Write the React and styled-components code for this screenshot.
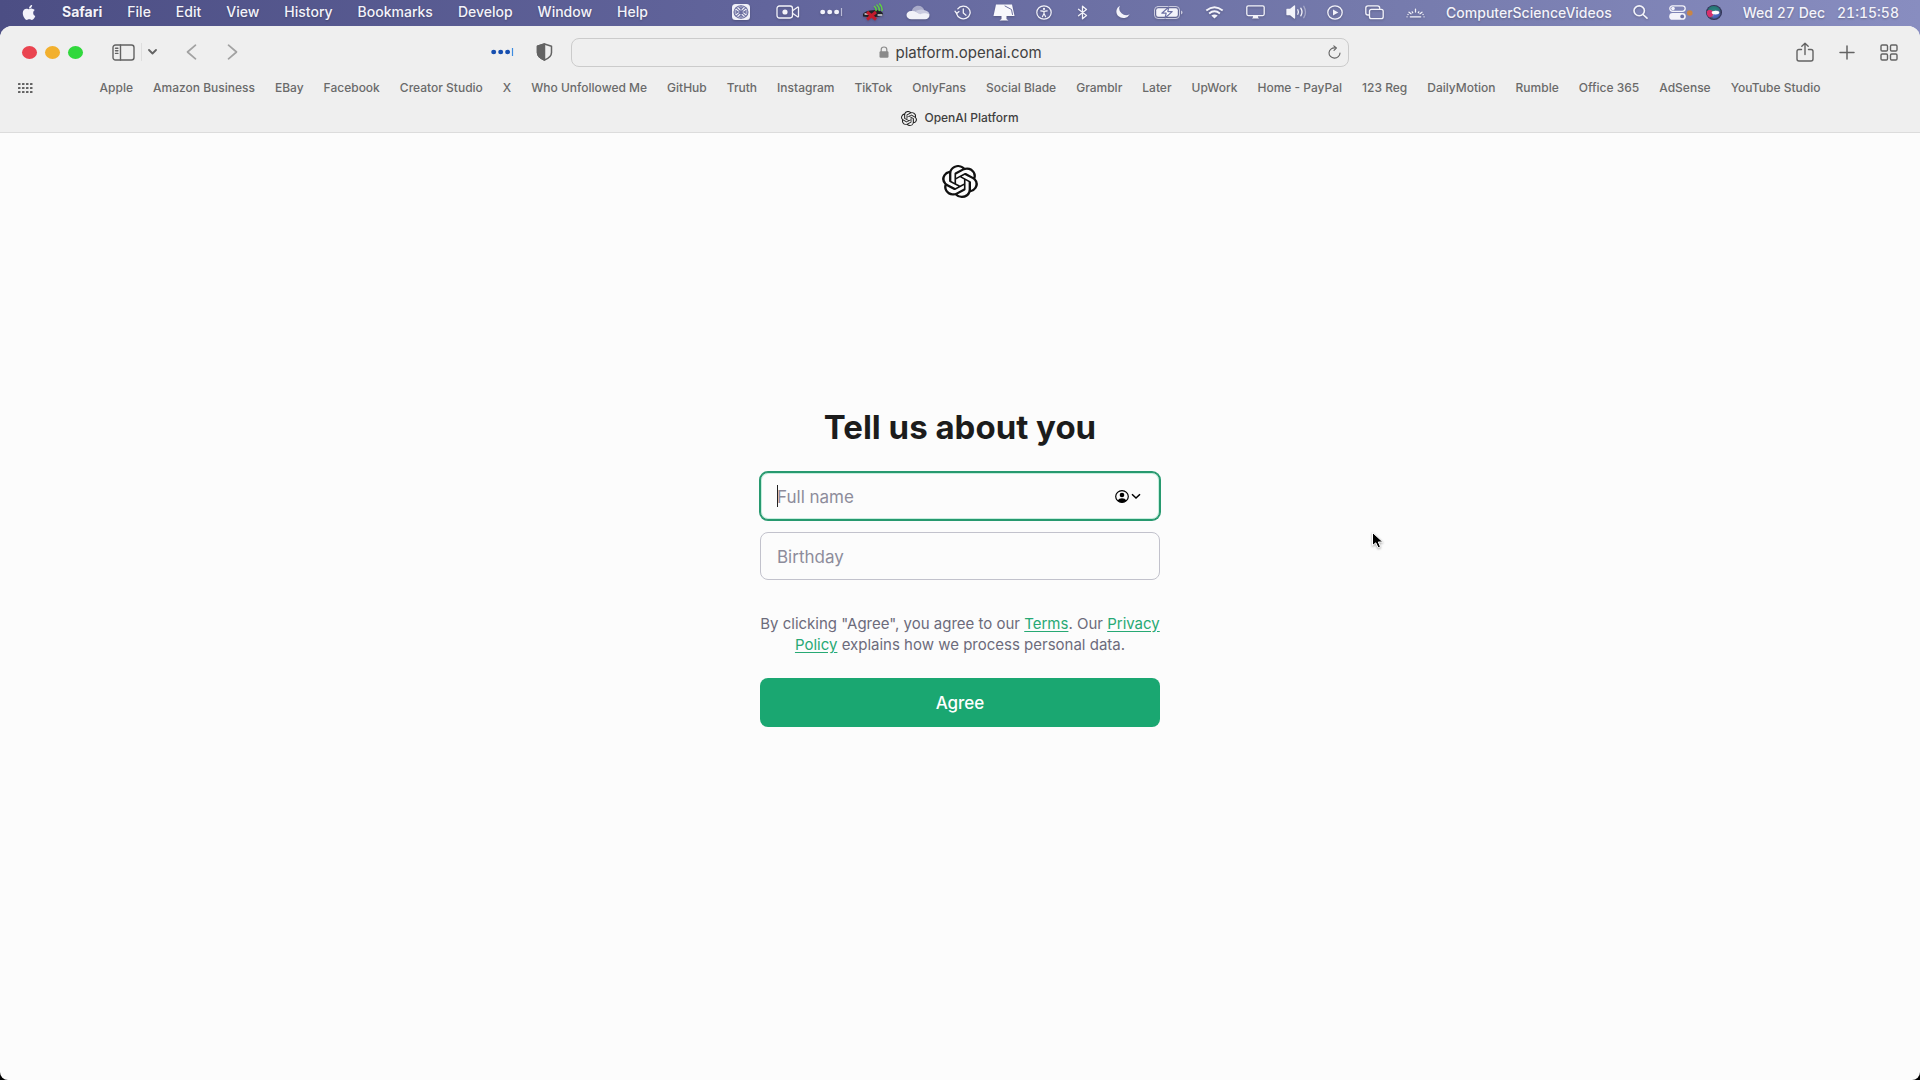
import React from "react";
import styled, { createGlobalStyle } from "styled-components";
import { FaApple } from "react-icons/fa";

const GlobalStyle = createGlobalStyle`
  * {
    box-sizing: border-box;
  }

  body {
    margin: 0;
    background: #000;
    font-family: Inter, "Liberation Sans", sans-serif;
  }

  button,
  input {
    font-family: inherit;
  }
`;

const Desktop = styled.div`
  min-height: 100vh;
  display: flex;
  flex-direction: column;
  background: linear-gradient(90deg, #4c4e84 0%, #62659c 40%, #7479ab 70%, #888dc0 100%) top / 100% 60px no-repeat, #000;
`;

/* ---------- menu bar ---------- */

const MenuBar = styled.header`
  height: 26px;
  display: flex;
  justify-content: space-between;
  align-items: center;
  padding: 0 21px 2px;
  color: #f3f3fa;
  font-size: 14px;
  font-weight: 500;
  text-shadow: 0 1px 2px rgba(0, 0, 0, 0.25);
`;

const Menus = styled.nav`
  display: flex;
  align-items: center;
  gap: 25px;
`;

const AppleMark = styled(FaApple)`
  width: 16px;
  height: 17px;
`;

const MenuItem = styled.button`
  padding: 0;
  border: none;
  background: none;
  color: inherit;
  font-size: 14px;
  line-height: 20px;
  font-weight: ${({ $bold }) => ($bold ? 700 : 500)};
  text-shadow: inherit;
  white-space: nowrap;
`;

const StatusArea = styled.div`
  display: flex;
  align-items: center;
  gap: 21px;
  white-space: nowrap;
`;

const StatusItem = styled.span`
  width: ${({ $width }) => $width}px;
  height: 20px;
  display: flex;
  align-items: center;
  justify-content: center;

  svg {
    flex: none;
    filter: drop-shadow(0 1px 1px rgba(0, 0, 0, 0.2));
  }
`;

const Clock = styled.time`
  display: flex;
  gap: 12px;
  font-variant-numeric: tabular-nums;
`;

/* ---------- browser window ---------- */

const BrowserWindow = styled.div`
  flex: 1;
  display: flex;
  flex-direction: column;
  border-radius: 12px 12px 8px 8px;
  background: #fcfcfc;
  overflow: hidden;
`;

const Chrome = styled.div`
  background: #efefef;
  border-bottom: 1px solid #dcdcdc;
`;

const Toolbar = styled.div`
  height: 52px;
  display: grid;
  grid-template-columns: 1fr 41.5% 1fr;
  align-items: center;
  padding: 0 22px;
`;

const ToolbarSide = styled.div`
  display: flex;
  align-items: center;
  justify-content: ${({ $end }) => ($end ? "flex-end" : "space-between")};
  gap: ${({ $end }) => ($end ? "25px" : "0")};
  padding-right: ${({ $end }) => ($end ? "0" : "18px")};
`;

const ToolGroup = styled.div`
  display: flex;
  align-items: center;
  gap: ${({ $gap }) => $gap}px;
`;

const TrafficLight = styled.button`
  width: 15px;
  height: 13px;
  padding: 0;
  border: none;
  border-radius: 50%;
  background: ${({ $color }) => $color};
`;

const IconButton = styled.button`
  display: flex;
  padding: 0;
  border: none;
  background: none;
  color: ${({ $color }) => $color || "#636363"};
`;

const Divider = styled.span`
  width: 1px;
  height: 18px;
  background: #dedede;
`;

const AddressBar = styled.div`
  height: 29px;
  display: flex;
  align-items: center;
  gap: 7px;
  padding: 0 7px;
  border: 1px solid #cbcbcb;
  border-radius: 8px;
`;

const AddressText = styled.label`
  flex: 1;
  display: flex;
  align-items: center;
  justify-content: center;
  gap: 7px;
  padding-left: 20px;
  color: #8a8a8a;
`;

const AddressInput = styled.input`
  width: 146px;
  padding: 2px 0 0;
  border: none;
  outline: none;
  background: none;
  color: #414141;
  font-size: 15px;
  line-height: 20px;
`;

const BookmarksBar = styled.nav`
  height: 20px;
  display: grid;
  grid-template-columns: 15px 1fr 15px;
  align-items: center;
  padding: 0 18px;
`;

const Bookmarks = styled.div`
  display: flex;
  justify-content: center;
  gap: 20px;
`;

const Bookmark = styled.a`
  color: #6a6a6a;
  font-size: 12px;
  font-weight: 500;
  line-height: 16px;
  text-decoration: none;
  white-space: nowrap;
`;

const Tab = styled.div`
  height: 34px;
  display: flex;
  justify-content: center;
  align-items: center;
  gap: 7px;
  padding-top: 6px;
  color: #3f3f3f;
  font-size: 12px;
  font-weight: 500;
  line-height: 16px;
`;

/* ---------- page ---------- */

const Page = styled.div`
  flex: 1;
  display: flex;
  flex-direction: column;
  align-items: center;
  padding-top: 32px;
`;

const FormWrap = styled.main`
  width: 400px;
  max-width: 100%;
  margin-top: 208px;
`;

const Title = styled.h1`
  margin: 0 0 24px;
  color: #1c1c1c;
  font-size: 33px;
  line-height: 42px;
  font-weight: 700;
  text-align: center;
  white-space: nowrap;
`;

const Form = styled.form`
  display: flex;
  flex-direction: column;
`;

const Field = styled.label`
  position: relative;
  display: block;
  margin-bottom: 12px;
`;

const TextInput = styled.input`
  display: block;
  width: 100%;
  height: 48px;
  padding: 2px 16px 0;
  border: 1px solid ${({ $active }) => ($active ? "#27996f" : "#c2c2cc")};
  border-radius: 8px;
  outline: none;
  box-shadow: ${({ $active }) => ($active ? "0 0 0 1px #27996f, inset 0 0 0 1px #c5eedd" : "none")};
  background: #fcfcfc;
  font-size: 17px;

  &::placeholder {
    color: #8d8c9b;
    opacity: 1;
  }
`;

const Caret = styled.span`
  position: absolute;
  top: 13px;
  left: 17px;
  width: 1px;
  height: 22px;
  background: #222;
`;

const AutofillButton = styled.button`
  position: absolute;
  top: 18px;
  right: 19px;
  display: flex;
  align-items: center;
  gap: 2px;
  padding: 0;
  border: none;
  background: none;
`;

const Terms = styled.p`
  margin: 21px 0 23px;
  color: #6c6b7b;
  font-size: 15px;
  line-height: 21px;
  text-align: center;

  a {
    color: #27a974;
    text-underline-offset: 2px;
  }
`;

const AgreeButton = styled.button`
  height: 49px;
  border: none;
  border-radius: 8px;
  background: #1aa771;
  color: #fff;
  font-size: 17px;
  font-weight: 500;
`;

const Pointer = styled.svg`
  position: absolute;
  top: 531px;
  left: 1371px;
  filter: drop-shadow(0 1px 1px rgba(0, 0, 0, 0.35));
`;

/* ---------- drawings ---------- */

const OpenAIMark = ({ width, height, color }) => (
  <svg width={width} height={height} viewBox="0 0 24 24" preserveAspectRatio="none" fill={color} aria-hidden="true">
    <path d="M22.2819 9.8211a5.9847 5.9847 0 0 0-.5157-4.9108 6.0462 6.0462 0 0 0-6.5098-2.9A6.0651 6.0651 0 0 0 4.9807 4.1818a5.9847 5.9847 0 0 0-3.9977 2.9 6.0462 6.0462 0 0 0 .7427 7.0966 5.98 5.98 0 0 0 .511 4.9107 6.051 6.051 0 0 0 6.5146 2.9001A5.9847 5.9847 0 0 0 13.2599 24a6.0557 6.0557 0 0 0 5.7718-4.2058 5.9894 5.9894 0 0 0 3.9977-2.9001 6.0557 6.0557 0 0 0-.7475-7.0729zm-9.022 12.6081a4.4755 4.4755 0 0 1-2.8764-1.0408l.1419-.0804 4.7783-2.7582a.7948.7948 0 0 0 .3927-.6813v-6.7369l2.02 1.1686a.071.071 0 0 1 .038.052v5.5826a4.504 4.504 0 0 1-4.4945 4.4944zm-9.6607-4.1254a4.4708 4.4708 0 0 1-.5346-3.0137l.142.0852 4.783 2.7582a.7712.7712 0 0 0 .7806 0l5.8428-3.3685v2.3324a.0804.0804 0 0 1-.0332.0615L9.74 19.9502a4.4992 4.4992 0 0 1-6.1408-1.6464zM2.3408 7.8956a4.485 4.485 0 0 1 2.3655-1.9728V11.6a.7664.7664 0 0 0 .3879.6765l5.8144 3.3543-2.0201 1.1685a.0757.0757 0 0 1-.071 0l-4.8303-2.7865A4.504 4.504 0 0 1 2.3408 7.872zm16.5963 3.8558L13.1038 8.364 15.1192 7.2a.0757.0757 0 0 1 .071 0l4.8303 2.7913a4.4944 4.4944 0 0 1-.6765 8.1042v-5.6772a.79.79 0 0 0-.407-.667zm2.0107-3.0231l-.142-.0852-4.7735-2.7818a.7759.7759 0 0 0-.7854 0L9.409 9.2297V6.8974a.0662.0662 0 0 1 .0284-.0615l4.8303-2.7866a4.4992 4.4992 0 0 1 6.6802 4.66zM8.3065 12.863l-2.02-1.1638a.0804.0804 0 0 1-.038-.0567V6.0742a4.4992 4.4992 0 0 1 7.3757-3.4537l-.142.0805L8.704 5.459a.7948.7948 0 0 0-.3927.6813zm1.0976-2.3654l2.602-1.4998 2.6069 1.4998v2.9994l-2.5974 1.4997-2.6067-1.4997Z" />
  </svg>
);

const Line = ({ w, h, sw = 1.3, children }) => (
  <svg
    width={w}
    height={h}
    viewBox={`0 0 ${w} ${h}`}
    fill="none"
    stroke="currentColor"
    strokeWidth={sw}
    strokeLinecap="round"
    strokeLinejoin="round"
    aria-hidden="true"
  >
    {children}
  </svg>
);

const SnowTile = () => (
  <Line w={18} h={16} sw={1.1}>
    <rect width="18" height="16" rx="3.5" fill="#f0f0f8" stroke="none" />
    <ellipse cx="9" cy="8" rx="7" ry="6.3" stroke="#6b6ea0" />
    <path d="M9 2v12M2.5 8h13M4.3 3.8l9.4 8.4M13.7 3.8l-9.4 8.4" stroke="#6b6ea0" />
    <path d="M7 3.2l2 1.6 2-1.6M7 12.8l2-1.6 2 1.6M3.8 6.4L5.6 8 3.8 9.6M14.2 6.4L12.4 8l1.8 1.6" stroke="#6b6ea0" />
  </Line>
);

const Camera = () => (
  <Line w={24} h={14}>
    <rect x="1" y="1" width="15.5" height="12" rx="2.4" />
    <path d="M16.5 5.8l5-3.6q1-.5 1 .6v8.4q0 1.1-1 .6l-5-3.6" />
    <circle cx="9" cy="7" r="2.6" fill="currentColor" stroke="none" />
  </Line>
);

const Dots = ({ bar }) => (
  <Line w={23} h={10} sw={1.2}>
    <g fill="currentColor" stroke="none">
      <ellipse cx="2.7" cy="5" rx="2.5" ry="2.3" />
      <ellipse cx="9.7" cy="5" rx="2.5" ry="2.3" />
      <ellipse cx="16.6" cy="5" rx="2.5" ry="2.3" />
    </g>
    <path d="M21.5 1v8" stroke={bar} strokeLinecap="butt" />
  </Line>
);

const CarSignal = () => (
  <Line w={22} h={18}>
    <path d="M1 11q2-3 7-3.5l6-.5q5 0 7 3.5v2q-8 3-20 1z" fill="#202027" stroke="none" />
    <path d="M3 11h4M16 12h4" stroke="#d9d9e4" />
    <path d="M12.5 3.5q2 1.5 1.5 4M15 2q2.6 2.2 2.2 5.5M17.7 1q2.8 2.8 2.3 6.5" stroke="#5ed043" strokeWidth="1.5" />
    <path d="M5 9l9 7.5M14 9l-9 7.5" stroke="#c21c2c" strokeWidth="3" strokeLinecap="butt" />
  </Line>
);

const Cloud = () => (
  <Line w={24} h={15}>
    <path d="M5.5 7.2C6 3.2 9 .8 12.2.8c3 0 5.3 1.8 6.2 4.6l-6 3.4z" fill="#a9abc9" stroke="none" />
    <path d="M9.5 6q5-2.6 9.3-.8 4.7 1 4.7 4.7l-8.5.5z" fill="#c9cadf" stroke="none" />
    <path d="M5.2 6c3.8-.6 6.3 2 9 3.2 2.8-1.2 6-1.2 9.3.6 0 3-1.8 4.4-4.3 4.4H5.6C2.5 14.2.5 12.4.5 10S2.4 6.2 5.2 6z" fill="#f1f1f8" stroke="none" />
  </Line>
);

const TimeMachine = () => (
  <Line w={17} h={15}>
    <path d="M2.7 8.8A6.8 6.3 0 1 0 3.8 3.8" />
    <path d="M1 6.2l1.7 2.4 2.3-2" />
    <path d="M9.3 4v4l2.7 2.2" />
  </Line>
);

const MonitorFilled = () => (
  <Line w={22} h={17}>
    <path d="M3 .5h16l2.5 11.5H.5z" fill="#f8f8fc" stroke="none" />
    <path d="M8.5 12h5v3l2 1.5h-9l2-1.5z" fill="#f8f8fc" stroke="none" />
    <path d="M12 2l6.5 3.5 1 5" stroke="#6c6f9f" strokeWidth="1" />
  </Line>
);

const Accessibility = () => (
  <Line w={16} h={15} sw={1.2}>
    <ellipse cx="8" cy="7.5" rx="7.2" ry="6.7" />
    <circle cx="8" cy="3.9" r="1.1" fill="currentColor" stroke="none" />
    <path d="M4.8 5.8l3.2.6 3.2-.6M8 6.4v2.1l-1.6 3.2M8 8.5l1.6 3.2" />
  </Line>
);

const Bluetooth = () => (
  <Line w={11} h={15}>
    <path d="M1.5 4.3l8 6.2-4 3.3V1.2l4 3.3-8 6.2" />
  </Line>
);

const Moon = () => (
  <Line w={15} h={14}>
    <path d="M5 .7A7 6.6 0 1 0 14.7 9.3 7 6.6 0 0 1 5 .7z" fill="currentColor" stroke="none" />
  </Line>
);

const Battery = () => (
  <Line w={29} h={13} sw={1}>
    <rect x=".5" y=".5" width="25" height="12" rx="3.5" stroke="#c9cade" />
    <rect x="2.2" y="2.2" width="21.6" height="8.6" rx="2" fill="currentColor" stroke="none" />
    <path d="M27 4.5q1.5.4 1.5 2t-1.5 2z" fill="#c9cade" stroke="none" />
    <path d="M14.8 1L7.8 7.2h4.4L11 12l7.2-6.4h-4.4z" fill="#fff" stroke="#6d71a5" strokeWidth="1.2" />
  </Line>
);

const Wifi = () => (
  <Line w={19} h={13} sw={1.9}>
    <path d="M1.3 4.6q8.2-6.6 16.4 0M4.1 7.4q5.4-4.2 10.8 0" strokeLinecap="butt" />
    <path d="M6.3 9.5q3.2-2.2 6.4 0L9.5 12.6z" fill="currentColor" stroke="none" />
  </Line>
);

const Display = () => (
  <Line w={19} h={14} sw={1.3}>
    <rect x=".8" y=".8" width="17.4" height="9.8" rx="1.5" />
    <path d="M7 11h5v1.2l1 1.3H6l1-1.3z" fill="currentColor" stroke="none" />
  </Line>
);

const Sound = () => (
  <Line w={21} h={14} sw={1.3}>
    <path d="M1 4.5h3.2L8.5 1v12L4.2 9.5H1z" fill="currentColor" />
    <path d="M11.8 4.8q1.2 2.2 0 4.4M14.8 3.2q2.4 3.8 0 7.6" />
    <path d="M17.8 1.3q3.4 5.7 0 11.4" opacity=".4" />
  </Line>
);

const PlayCircle = () => (
  <Line w={16} h={15}>
    <ellipse cx="8" cy="7.5" rx="7.2" ry="6.7" />
    <path d="M6 4.5l5.3 3-5.3 3z" fill="currentColor" stroke="none" />
  </Line>
);

const Windows = () => (
  <Line w={19} h={15}>
    <path d="M3.8 10H3Q.8 10 .8 8V3Q.8.8 3 .8h9.5q2.2 0 2.2 2.2v.5" />
    <rect x="4.5" y="4.3" width="13.7" height="9.4" rx="2" />
  </Line>
);

const Brightness = () => (
  <Line w={19} h={11}>
    <path d="M1 9.8h.1M4.3 9.8h10.4M18 9.8h.1M5 6.8L3 5.2M14 6.8l2-1.6M9.5 5V2.2M6.7 5.7l-.5-.8M12.3 5.7l.5-.8M2 7.5h.1M17 7.5h.1" />
  </Line>
);

const Search = () => (
  <Line w={15} h={14} sw={1.6}>
    <ellipse cx="6.2" cy="5.8" rx="5.2" ry="4.9" />
    <path d="M10 9.5l4 3.7" />
  </Line>
);

const ControlCentre = () => (
  <Line w={24} h={15} sw={1.3}>
    <rect x=".8" y=".8" width="15.4" height="5.6" rx="2.8" />
    <circle cx="4" cy="3.6" r="1.8" fill="currentColor" stroke="none" />
    <rect x=".2" y="8" width="16.6" height="6.8" rx="3.4" fill="currentColor" stroke="none" />
    <circle cx="13.2" cy="11.4" r="1.9" fill="#6b70a5" stroke="none" />
    <circle cx="20.8" cy="8" r="2.8" fill="#c98546" stroke="none" />
  </Line>
);

const Siri = () => (
  <svg width="16" height="15" viewBox="0 0 16 15" aria-hidden="true">
    <defs>
      <radialGradient id="siriBase">
        <stop offset="0" stopColor="#eaf4ff" />
        <stop offset=".3" stopColor="#8d9ad0" />
        <stop offset="1" stopColor="#252848" />
      </radialGradient>
    </defs>
    <ellipse cx="8" cy="7.5" rx="8" ry="7.5" fill="url(#siriBase)" />
    <path d="M2 5Q3 1.2 8 1q5 .2 6.5 5Q10 4 7.5 7z" fill="#1f7f74" opacity=".85" />
    <path d="M.6 6.5Q4 2.5 8 7.3 7 12.5 3 12.3.5 10 .6 6.5z" fill="#d8306c" />
    <path d="M8 8.5q4-1 6.5.5-2.5 4.500-7.500 4.500z" fill="#4361c2" opacity=".8" />
    <ellipse cx="9.5" cy="7.6" rx="3.8" ry="1.9" fill="#fff" />
  </svg>
);

const statusIcons = [
  { name: "Snow", Icon: SnowTile, width: 28 },
  { name: "Camera", Icon: Camera, width: 24 },
  { name: "Password manager", Icon: Dots, width: 20 },
  { name: "Car", Icon: CarSignal, width: 22 },
  { name: "Cloud", Icon: Cloud, width: 26 },
  { name: "Time Machine", Icon: TimeMachine, width: 20 },
  { name: "Monitor", Icon: MonitorFilled, width: 22 },
  { name: "Accessibility", Icon: Accessibility, width: 16 },
  { name: "Bluetooth", Icon: Bluetooth, width: 18 },
  { name: "Focus", Icon: Moon, width: 20 },
  { name: "Battery", Icon: Battery, width: 30 },
  { name: "Wi-Fi", Icon: Wifi, width: 20 },
  { name: "Display", Icon: Display, width: 20 },
  { name: "Sound", Icon: Sound, width: 20 },
  { name: "Now playing", Icon: PlayCircle, width: 16 },
  { name: "Stage", Icon: Windows, width: 20 },
  { name: "Brightness", Icon: Brightness, width: 20 },
];

const menus = ["File", "Edit", "View", "History", "Bookmarks", "Develop", "Window", "Help"];

const bookmarks = [
  "Apple",
  "Amazon Business",
  "EBay",
  "Facebook",
  "Creator Studio",
  "X",
  "Who Unfollowed Me",
  "GitHub",
  "Truth",
  "Instagram",
  "TikTok",
  "OnlyFans",
  "Social Blade",
  "Gramblr",
  "Later",
  "UpWork",
  "Home - PayPal",
  "123 Reg",
  "DailyMotion",
  "Rumble",
  "Office 365",
  "AdSense",
  "YouTube Studio",
];

const App = () => (
  <>
    <GlobalStyle />
    <Desktop>
      <MenuBar>
        <Menus>
          <AppleMark />
          <MenuItem $bold>Safari</MenuItem>
          {menus.map((menu) => (
            <MenuItem key={menu}>{menu}</MenuItem>
          ))}
        </Menus>
        <StatusArea>
          {statusIcons.map(({ name, Icon, width }) => (
            <StatusItem key={name} $width={width}>
              <Icon bar="#b9bbd6" />
            </StatusItem>
          ))}
          <span>ComputerScienceVideos</span>
          <StatusItem $width={15}>
            <Search />
          </StatusItem>
          <ToolGroup $gap={13}>
            <ControlCentre />
            <Siri />
          </ToolGroup>
          <Clock>
            <span>Wed 27 Dec</span>
            <span>21:15:58</span>
          </Clock>
        </StatusArea>
      </MenuBar>

      <BrowserWindow>
        <Chrome>
          <Toolbar>
            <ToolbarSide>
              <ToolGroup $gap={29}>
                <ToolGroup $gap={8}>
                  <TrafficLight $color="#ea4450" aria-label="Close" />
                  <TrafficLight $color="#f2b02e" aria-label="Minimise" />
                  <TrafficLight $color="#30d83c" aria-label="Zoom" />
                </ToolGroup>
                <ToolGroup $gap={6}>
                  <IconButton aria-label="Sidebar">
                    <Line w={23} h={17} sw={1.4}>
                      <rect x="1" y="1" width="21" height="15" rx="2.5" />
                      <path d="M8.5 1v15M3.5 4.2h2.4M3.5 6.8h2.4M3.5 9.4h2.4" />
                    </Line>
                  </IconButton>
                  <Divider />
                  <IconButton aria-label="Tab groups">
                    <Line w={9} h={6} sw={1.8}>
                      <path d="M1 1l3.5 3.5L8 1" />
                    </Line>
                  </IconButton>
                </ToolGroup>
                <ToolGroup $gap={30}>
                  <IconButton $color="#a2a2a2" aria-label="Back">
                    <Line w={11} h={16} sw={1.7}>
                      <path d="M9.5 1.2L1.5 8l8 6.8" />
                    </Line>
                  </IconButton>
                  <IconButton $color="#a2a2a2" aria-label="Forward">
                    <Line w={11} h={16} sw={1.7}>
                      <path d="M1.5 1.2L9.5 8l-8 6.8" />
                    </Line>
                  </IconButton>
                </ToolGroup>
              </ToolGroup>
              <ToolGroup $gap={22}>
                <IconButton $color="#164fb0" aria-label="Passwords">
                  <Dots bar="#3d8be0" />
                </IconButton>
                <IconButton aria-label="Privacy report">
                  <Line w={17} h={18} sw={1.5}>
                    <path d="M8.5 1l7 2.2v6.3q0 4.8-7 7.5-7-2.7-7-7.5V3.2z" />
                    <path d="M8.5 1v16q-7-2.7-7-7.5V3.2z" fill="currentColor" />
                  </Line>
                </IconButton>
              </ToolGroup>
            </ToolbarSide>
            <AddressBar>
              <AddressText>
                <svg width="10" height="12" viewBox="0 0 10 12" aria-hidden="true">
                  <path d="M2.2 6V3.6Q2.2 1 5 1t2.8 2.6V6" fill="none" stroke="currentColor" strokeWidth="1.2" />
                  <rect x=".5" y="5.3" width="9" height="6.5" rx="1.2" fill="currentColor" />
                </svg>
                <AddressInput aria-label="Address" defaultValue="platform.openai.com" />
              </AddressText>
              <IconButton aria-label="Reload">
                <Line w={13} h={14} sw={1.1}>
                  <path d="M7 2.9A5.5 5.1 0 1 0 12 8" />
                  <path d="M5.8.8l2.6 2.2-2.4 2.4" />
                </Line>
              </IconButton>
            </AddressBar>
            <ToolbarSide $end>
              <IconButton aria-label="Share">
                <Line w={18} h={20} sw={1.4}>
                  <path d="M5.5 7.5H3q-2 0-2 2V17q0 2 2 2h12q2 0 2-2V9.5q0-2-2-2h-2.5" />
                  <path d="M9 12.5v-11M5.8 4.3l3.2-3 3.2 3" />
                </Line>
              </IconButton>
              <IconButton aria-label="New tab">
                <Line w={16} h={15} sw={1.5}>
                  <path d="M8 1v13M1 7.5h14" />
                </Line>
              </IconButton>
              <IconButton aria-label="Tab overview">
                <Line w={18} h={17} sw={1.4}>
                  <rect x="1" y="1" width="6.5" height="6" rx="1.2" />
                  <rect x="10.5" y="1" width="6.5" height="6" rx="1.2" />
                  <rect x="1" y="10" width="6.5" height="6" rx="1.2" />
                  <rect x="10.5" y="10" width="6.5" height="6" rx="1.2" />
                </Line>
              </IconButton>
            </ToolbarSide>
          </Toolbar>

          <BookmarksBar>
            <IconButton aria-label="Favourites">
              <svg width="15" height="10" viewBox="0 0 15 10" fill="currentColor" aria-hidden="true">
                {[0, 4, 8, 12].map((x) =>
                  [0, 4, 8].map((y) => <rect key={`${x}-${y}`} x={x} y={y} width="2.5" height="2" rx=".5" />)
                )}
              </svg>
            </IconButton>
            <Bookmarks>
              {bookmarks.map((bookmark) => (
                <Bookmark key={bookmark} href="#">
                  {bookmark}
                </Bookmark>
              ))}
            </Bookmarks>
          </BookmarksBar>

          <Tab>
            <OpenAIMark width={16} height={15} color="#222" />
            <span>OpenAI Platform</span>
          </Tab>
        </Chrome>

        <Page>
          <OpenAIMark width={36} height={33} color="#111" />
          <FormWrap>
            <Title>Tell us about you</Title>
            <Form>
              <Field>
                <TextInput $active type="text" placeholder="Full name" aria-label="Full name" />
                <Caret />
                <AutofillButton type="button" aria-label="Autofill contact">
                  <svg width="14" height="13" viewBox="0 0 14 13" aria-hidden="true">
                    <ellipse cx="7" cy="6.5" rx="6.3" ry="5.8" fill="none" stroke="#000" strokeWidth="1.2" />
                    <circle cx="7" cy="5" r="2.3" />
                    <path d="M2.5 10.5Q4 8.2 7 8.2t4.5 2.3Q9.5 12.5 7 12.5t-4.5-2z" />
                  </svg>
                  <svg width="10" height="7" viewBox="0 0 10 7" fill="none" stroke="#000" strokeWidth="1.5" aria-hidden="true">
                    <path d="M1 1.2l4 3.8 4-3.8" />
                  </svg>
                </AutofillButton>
              </Field>
              <Field>
                <TextInput type="text" placeholder="Birthday" aria-label="Birthday" />
              </Field>
              <Terms>
                By clicking "Agree", you agree to our <a href="#">Terms</a>. Our <a href="#">Privacy Policy</a> explains
                how we process personal data.
              </Terms>
              <AgreeButton type="button">Agree</AgreeButton>
            </Form>
          </FormWrap>
        </Page>
      </BrowserWindow>

      <Pointer width="13" height="19" viewBox="0 0 13 19" aria-hidden="true">
        <path d="M1.5 1.5v13l3.3-2.7 2.3 5 2.4-1-2.2-4.8h4.5z" fill="#000" stroke="#fff" strokeWidth="1" />
      </Pointer>
    </Desktop>
  </>
);

export default App;
